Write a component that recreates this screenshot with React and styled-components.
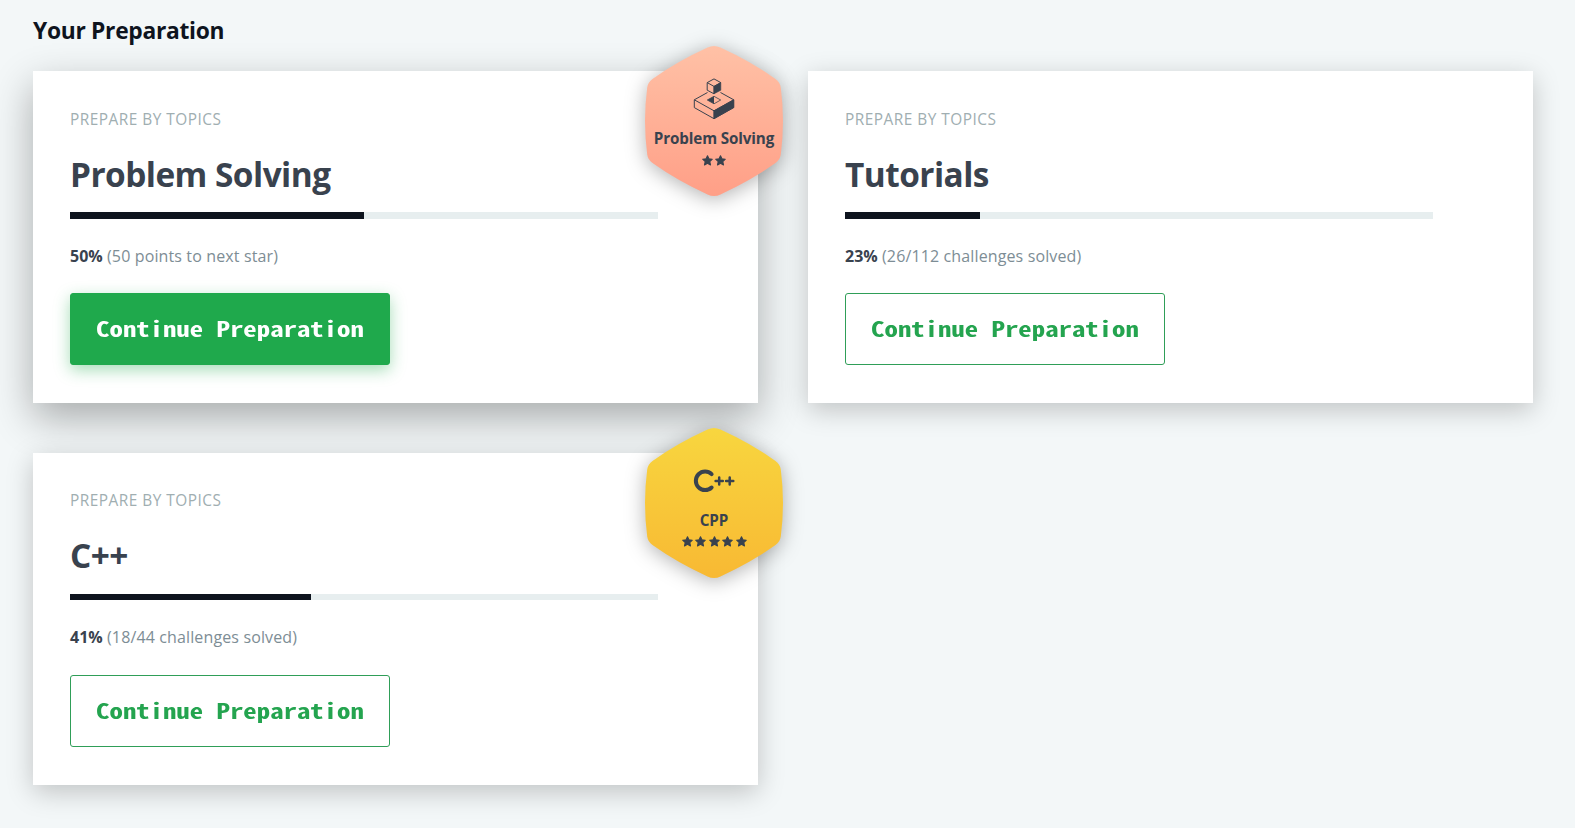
import React from "react";
import styled, { createGlobalStyle, css } from "styled-components";

const GlobalStyle = createGlobalStyle`
  *, *::before, *::after { box-sizing: border-box; }
  body {
    margin: 0;
    min-height: 828px;
    background: #f3f7f8;
    color: #39424e;
    font-family: "Open Sans", "Noto Sans", sans-serif;
  }
`;

const Page = styled.main`
  padding: 14px 42px 43px 33px;
`;

const Heading = styled.h1`
  margin: 0 0 24.2px;
  font-size: 22.8px;
  line-height: 33px;
  font-weight: 700;
  letter-spacing: -0.3px;
  color: #0e141e;
`;

const CardGrid = styled.div`
  display: grid;
  grid-template-columns: repeat(2, 725px);
  grid-auto-rows: 331.7px;
  gap: 50px;
`;

const Card = styled.article`
  position: relative;
  display: flex;
  flex-direction: column;
  align-items: flex-start;
  padding: 37.5px 37px 35.5px;
  background: #fff;
  box-shadow: ${(p) =>
    p.$raised
      ? "0 15px 38px rgba(0, 0, 0, 0.31)"
      : "0 7px 25px rgba(0, 0, 0, 0.21)"};
`;

const Label = styled.span`
  font-size: 15.4px;
  line-height: 22px;
  letter-spacing: 0.49px;
  text-transform: uppercase;
  color: #a0aeb1;
`;

const Title = styled.h2`
  margin: 18px 0 13.2px;
  font-size: 33.4px;
  line-height: 50px;
  font-weight: 700;
  letter-spacing: -0.54px;
  color: #39424e;
`;

const Track = styled.div`
  width: 588px;
  height: 6.7px;
  background: #e7eeef;
`;

const Fill = styled.div`
  height: 100%;
  background: #0e141e;
`;

const Progress = styled.p`
  margin: 25px 0 25.4px;
  font-size: 16px;
  line-height: 24px;
  color: #7d8d95;
  letter-spacing: 0.13px;

  strong {
    font-weight: 700;
    letter-spacing: 0;
    color: #39424e;
  }
`;

const Button = styled.button`
  display: flex;
  align-items: center;
  justify-content: center;
  width: 320px;
  height: 72px;
  padding: 0 0 1px;
  border: 1px solid #2f9e58;
  border-radius: 3px;
  background: #fff;
  color: #24a44f;
  font-family: "Noto Sans Mono CJK SC", "DejaVu Sans Mono", monospace;
  font-size: 20.6px;
  line-height: 1;
  font-weight: 700;
  ${(p) =>
    p.$primary &&
    css`
      background: #1fa94c;
      border-color: #1fa94c;
      color: #fff;
      box-shadow: 0 5px 16px rgba(31, 169, 76, 0.4);
    `}
`;

const WideText = styled.span`
  display: block;
  white-space: nowrap;
  transform: scaleX(1.3);
`;

const BadgeRoot = styled.div`
  position: absolute;
  top: -25.3px;
  right: -25px;
  width: 138px;
  height: 150px;
`;

const BadgeShape = styled.svg`
  position: absolute;
  inset: 0;
  overflow: visible;
  filter: drop-shadow(0 3px 10px rgba(0, 0, 0, 0.3));
`;

const BadgeBody = styled.div`
  position: relative;
  display: flex;
  flex-direction: column;
  align-items: center;
  padding-top: 32.6px;
`;

const BadgeIcon = styled.svg`
  display: block;
  width: 42px;
  height: 42px;
  color: #39424e;
`;

const BadgeName = styled.span`
  margin-top: 7.7px;
  font-size: 15.2px;
  line-height: 20px;
  font-weight: 700;
  letter-spacing: -0.12px;
  white-space: nowrap;
  color: #39424e;
`;

const Stars = styled.div`
  display: flex;
  gap: 2.5px;
  margin-top: 6.5px;
`;

const StarIcon = () => (
  <svg width="11" height="11" viewBox="0 0 11 11">
    <path
      d="M5.5 .7 6.9 3.8 10.3 4.2 7.8 6.5 8.5 9.9 5.5 8.2 2.5 9.9 3.2 6.5 .7 4.2 4.1 3.8Z"
      fill="#39424e"
      stroke="#39424e"
      strokeWidth="1.1"
      strokeLinejoin="round"
    />
  </svg>
);

const CubesIcon = () => (
  <BadgeIcon viewBox="0 0 42 42" fill="none" stroke="currentColor" strokeLinejoin="round">
    <path d="M14.5 14.5 1.3 21.8V29.6L21 40.7 40.7 29.6V21.8L27.5 14.5" strokeWidth="1" />
    <path d="M1.3 21.8 21 32.8 40.7 21.8M21 32.8V40.7" strokeWidth="1" />
    <path d="M21 32.8 40.7 21.8V29.6L21 40.7Z" fill="currentColor" strokeWidth=".6" />
    <path d="M14.2 4.6 21 .9 27.8 4.6 21 8.4ZM14.2 4.6V12.2L21 15.8V8.4" strokeWidth="1" />
    <path d="M21 8.4 27.8 4.6V12.2L21 15.8Z" fill="currentColor" strokeWidth=".6" />
    <path d="M14.3 22 21 18.3 27.7 22 21 25.8Z" strokeWidth=".8" />
    <path d="M14.3 22 21 18.3V25.8Z" fill="currentColor" stroke="none" />
  </BadgeIcon>
);

const CppIcon = () => (
  <BadgeIcon viewBox="0 0 42 42" fill="none" stroke="currentColor" strokeLinecap="round">
    <path d="M18.6 14.1A9.3 9.3 0 1 0 18.6 27.5" strokeWidth="4" />
    <path d="M22.6 21H29.8M26.2 17.4V24.6M33.1 21H40.3M36.7 17.4V24.6" strokeWidth="2.5" />
  </BadgeIcon>
);

const badgeKinds = {
  bronze: { from: "#ffc1a6", to: "#ff9f87", Icon: CubesIcon },
  gold: { from: "#f8d63f", to: "#f8b933", Icon: CppIcon },
};

function Badge({ kind, name, stars }) {
  const { from, to, Icon } = badgeKinds[kind];
  return (
    <BadgeRoot>
      <BadgeShape width="138" height="150" viewBox="0 0 138 150">
        <defs>
          <linearGradient id={`badge-${kind}`} x1="0" y1="0" x2="0" y2="1">
            <stop offset="0" stopColor={from} />
            <stop offset="1" stopColor={to} />
          </linearGradient>
        </defs>
        <path
          d="M62.5 1.6Q69-1.6 75.5 1.6Q106 15.5 130.5 33Q135 36 135.8 41.5Q140.2 75 135.8 108.5Q135 114 130.5 117Q106 134.5 75.5 148.4Q69 151.6 62.5 148.4Q32 134.5 7.5 117Q3 114 2.2 108.5Q-2.2 75 2.2 41.5Q3 36 7.5 33Q32 15.5 62.5 1.6Z"
          fill={`url(#badge-${kind})`}
        />
      </BadgeShape>
      <BadgeBody>
        <Icon />
        <BadgeName>{name}</BadgeName>
        <Stars>
          {Array.from({ length: stars }, (_, i) => (
            <StarIcon key={i} />
          ))}
        </Stars>
      </BadgeBody>
    </BadgeRoot>
  );
}

const topics = [
  {
    title: "Problem Solving",
    percent: 50,
    detail: "(50 points to next star)",
    active: true,
    badge: { kind: "bronze", name: "Problem Solving", stars: 2 },
  },
  { title: "Tutorials", percent: 23, detail: "(26/112 challenges solved)" },
  {
    title: "C++",
    percent: 41,
    detail: "(18/44 challenges solved)",
    badge: { kind: "gold", name: "CPP", stars: 5 },
  },
];

export default function App() {
  return (
    <Page>
      <GlobalStyle />
      <Heading>Your Preparation</Heading>
      <CardGrid>
        {topics.map((t) => (
          <Card key={t.title} $raised={t.active}>
            <Label>Prepare by topics</Label>
            <Title>{t.title}</Title>
            <Track>
              <Fill style={{ width: `${t.percent}%` }} />
            </Track>
            <Progress>
              <strong>{t.percent}%</strong> {t.detail}
            </Progress>
            <Button $primary={t.active}>
              <WideText>Continue Preparation</WideText>
            </Button>
            {t.badge && <Badge {...t.badge} />}
          </Card>
        ))}
      </CardGrid>
    </Page>
  );
}
